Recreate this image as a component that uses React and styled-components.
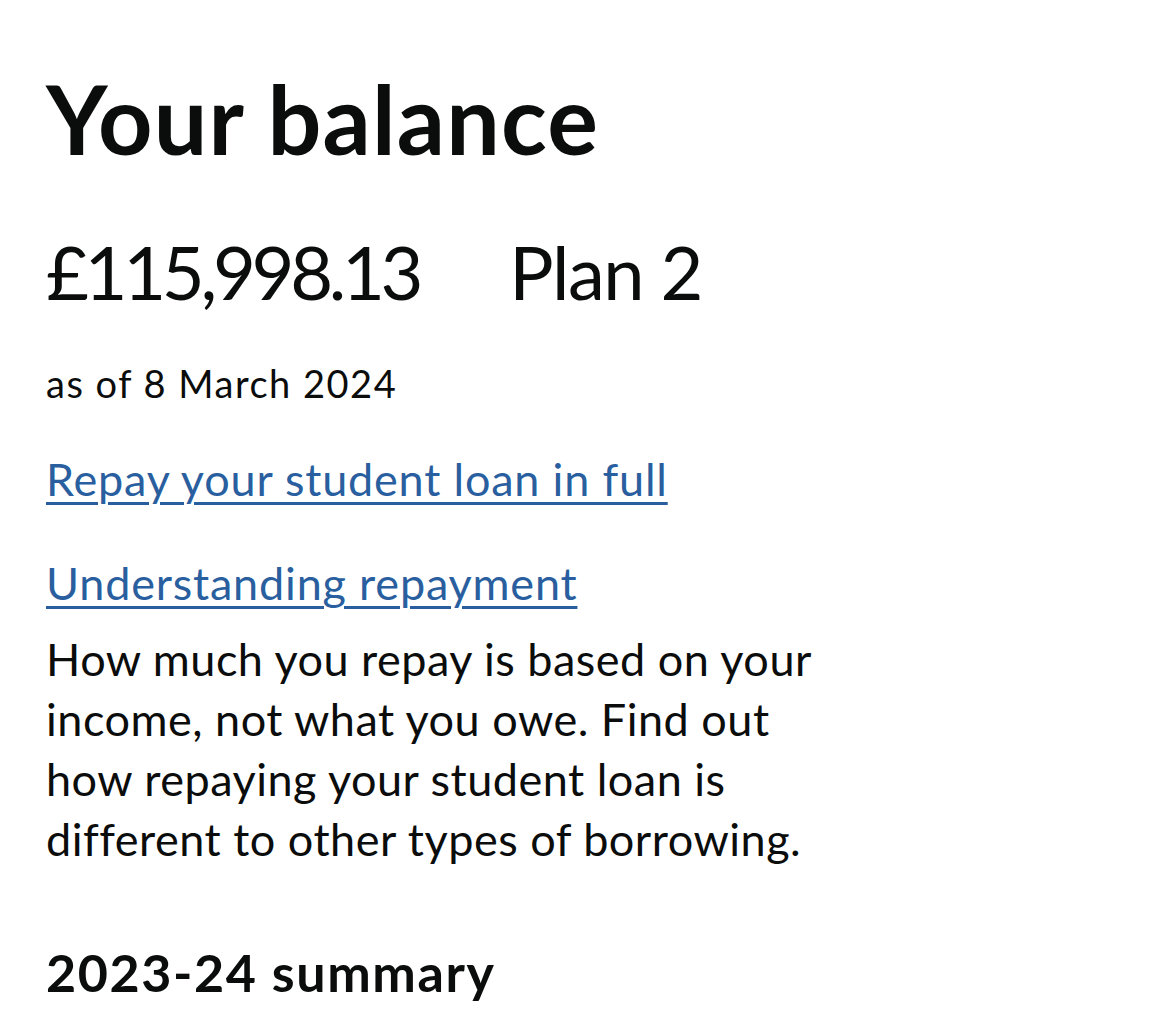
import React from 'react';
import styled, { createGlobalStyle } from 'styled-components';

const GlobalStyle = createGlobalStyle`
  body {
    margin: 0;
    background: #ffffff;
    color: #0b0c0c;
    font-family: Lato, "Noto Sans", Arial, sans-serif;
  }
`;

const Page = styled.main`
  padding: 68px 46px 0;
`;

const Title = styled.h1`
  margin: 0;
  font-size: 95px;
  line-height: 100px;
  font-weight: 700;
  letter-spacing: 1.2px;
`;

const BalanceRow = styled.div`
  display: flex;
  gap: 90px;
  margin-top: 64px;
  font-size: 74px;
  line-height: 80px;
  font-weight: 400;
`;

const Figure = styled.span`
  letter-spacing: ${(p) => p.$spacing}px;
`;

const AsOf = styled.p`
  margin: 49px 0 0;
  font-size: 38px;
  line-height: 44px;
  letter-spacing: 1.5px;
`;

const LinkBlock = styled.div`
  margin-top: ${(p) => p.$gap}px;
`;

const Link = styled.a`
  display: inline-block;
  font-size: 45px;
  line-height: 56px;
  letter-spacing: 0.8px;
  color: #2a5f9f;
  text-decoration: underline;
  text-decoration-thickness: 3px;
  text-underline-offset: 6px;
`;

const Body = styled.p`
  margin: 18px 0 0;
  max-width: 800px;
  font-size: 45px;
  line-height: 60px;
  letter-spacing: 0.5px;
`;

const Summary = styled.h2`
  margin: 73px 0 0;
  font-size: 52px;
  line-height: 60px;
  font-weight: 700;
  letter-spacing: 1.6px;
`;

export default function App() {
  return (
    <>
      <GlobalStyle />
      <Page>
        <Title>Your balance</Title>
        <BalanceRow>
          <Figure $spacing={-4.3}>£115,998.13</Figure>
          <Figure $spacing={-1.5}>Plan 2</Figure>
        </BalanceRow>
        <AsOf>as of 8 March 2024</AsOf>
        <LinkBlock $gap={46}>
          <Link href="#">Repay your student loan in full</Link>
        </LinkBlock>
        <LinkBlock $gap={48}>
          <Link href="#">Understanding repayment</Link>
          <Body>
            How much you repay is based on your income, not what you owe. Find
            out how repaying your student loan is different to other types of
            borrowing.
          </Body>
        </LinkBlock>
        <Summary>2023-24 summary</Summary>
      </Page>
    </>
  );
}
